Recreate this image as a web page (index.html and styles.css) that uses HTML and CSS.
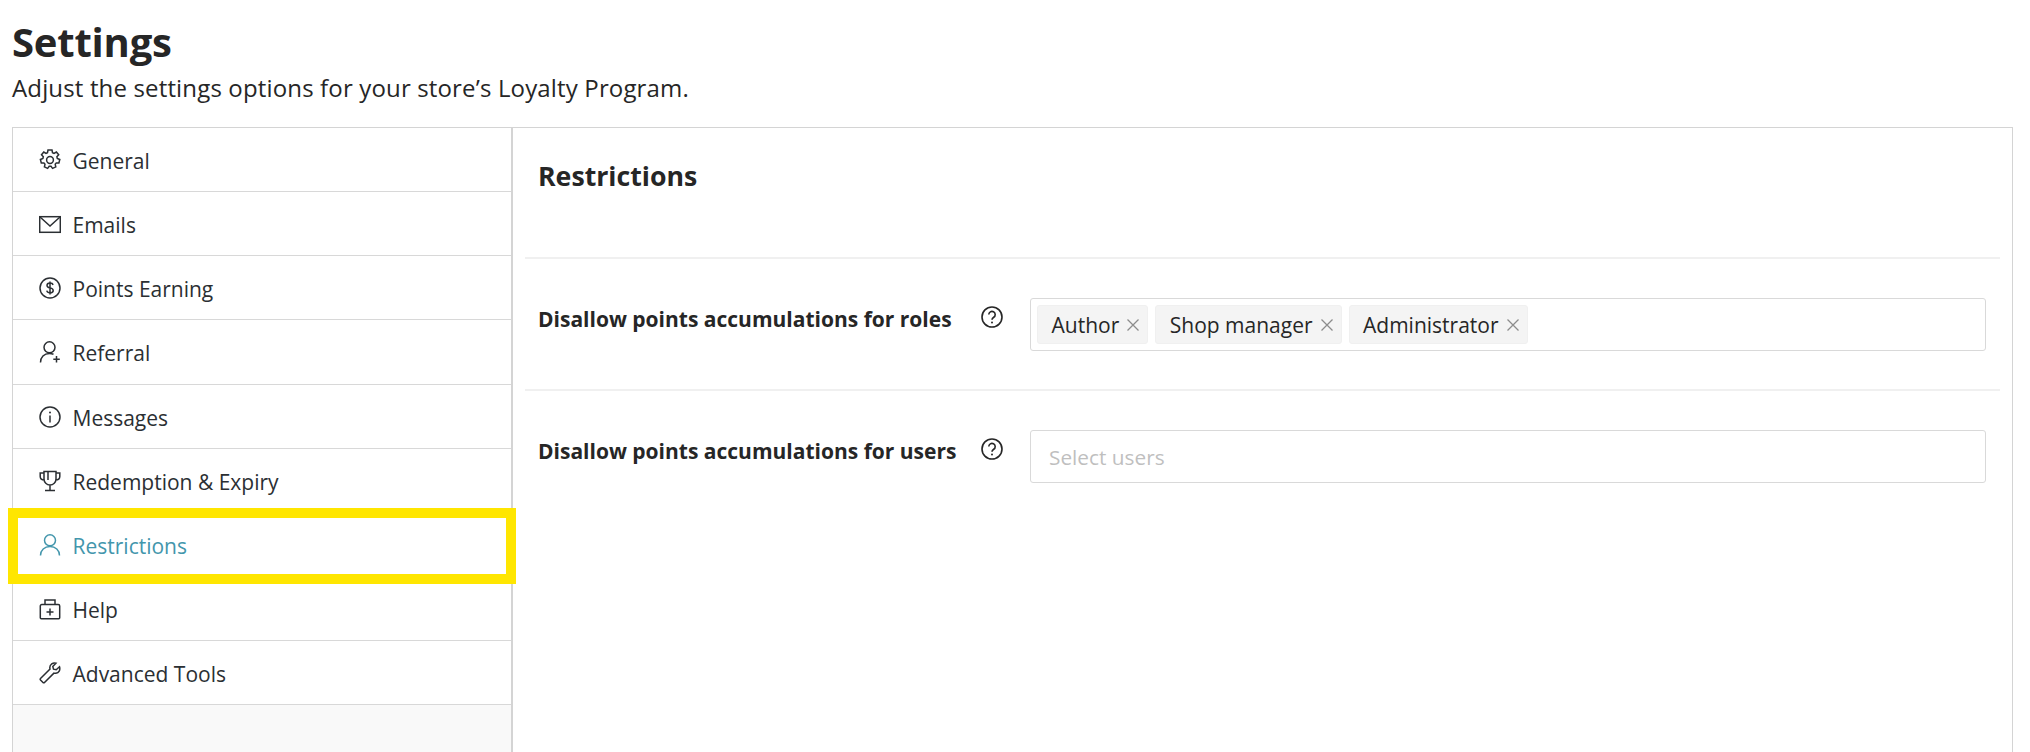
FILE: index.html
```html
<!DOCTYPE html>
<html lang="en">
<head>
<meta charset="utf-8">
<title>Settings</title>
<link rel="stylesheet" href="styles.css">
</head>
<body>
<svg class="defs" width="0" height="0" aria-hidden="true"><defs>
<symbol id="help" viewBox="0 0 22 22"><circle cx="11" cy="11" r="10" fill="none" stroke="currentColor" stroke-width="1.6"/><path d="M7.8 8.6a3.2 3.2 0 1 1 4.9 2.7c-1.100.7-1.700 1.200-1.700 2.500" fill="none" stroke="currentColor" stroke-width="1.6"/><circle cx="11" cy="16.400" r="1" fill="currentColor"/></symbol>
<symbol id="x" viewBox="0 0 14 14"><path d="M1.500 1.500l11 11M12.500 1.500l-11 11" fill="none" stroke="currentColor" stroke-width="1.300"/></symbol>
</defs></svg>
<header class="head">
  <h1 class="title">Settings</h1>
  <p class="sub">Adjust the settings options for your store’s Loyalty Program.</p>
</header>
<div class="panel">
  <nav class="side">
    <a class="item"><svg class="ico" viewBox="0 0 22 22"><path d="M9 1h4l.5 2.700 1.500.7 2.400-1.400 2.300 2.800-1.800 2 .4 1.700 2.500 1-.9 3.500-2.600-.1-1.100 1.400.6 2.600-3.200 1.500-1.600-2.100h-1.800l-1.600 2.100-3.200-1.500.6-2.600-1.100-1.400-2.600.1-.9-3.500 2.500-1 .4-1.700-1.800-2 2.300-2.800L7 4.400l1.500-.7z"/><circle cx="11" cy="11" r="3.400"/></svg><span>General</span></a>
    <a class="item"><svg class="ico" viewBox="0 0 22 22"><rect x="0.700" y="3.700" width="20.600" height="15.600"/><path d="M1 4l10 9 10-9"/></svg><span>Emails</span></a>
    <a class="item"><svg class="ico" viewBox="0 0 22 22"><circle cx="11" cy="11" r="10"/><path d="M14 8c-.3-1.300-1.500-1.900-3-1.900-1.700 0-3 .8-3 2.300 0 3.300 6.200 1.700 6.200 5 0 1.500-1.400 2.400-3.200 2.400-1.600 0-2.900-.7-3.200-2.100M11 4.500v13"/></svg><span>Points Earning</span></a>
    <a class="item"><svg class="ico" viewBox="0 0 22 22"><circle cx="10.500" cy="6.300" r="5.500"/><path d="M1.500 21.500c0-5.300 3.500-9 9-9 1.500 0 2.800.3 4 .8M17.500 15v6.500M14.300 18.200h6.500"/></svg><span>Referral</span></a>
    <a class="item"><svg class="ico" viewBox="0 0 22 22"><circle cx="11" cy="11" r="10"/><path d="M11 9.500v7"/><circle class="dot" cx="11" cy="6.500" r="1"/></svg><span>Messages</span></a>
    <a class="item"><svg class="ico" viewBox="0 0 22 22"><path d="M5 1.500h12v7.500a6 6 0 0 1-12 0zM5 3H1.200v3.500C1.200 8.800 3 10 5.500 10M17 3h3.800v3.500C20.800 8.800 19 10 16.500 10M11 15v5M6 20.500h10M9 2v8"/></svg><span>Redemption &amp; Expiry</span></a>
    <a class="item active"><svg class="ico" viewBox="0 0 22 22"><circle cx="11" cy="6.300" r="5.500"/><path d="M1.500 21.500c0-5.300 4-9 9.500-9s9.500 3.700 9.500 9"/></svg><span>Restrictions</span></a>
    <a class="item"><svg class="ico" viewBox="0 0 22 22"><path d="M2.800 6.500h16.400a1.500 1.500 0 0 1 1.500 1.500v11.800a1 1 0 0 1-1 1H2.300a1 1 0 0 1-1-1V8a1.500 1.500 0 0 1 1.500-1.500zM6 6.500V2h10v4.500M11 10.500v7M7.500 14h7"/></svg><span>Help</span></a>
    <a class="item"><svg class="ico" viewBox="0 0 22 22"><path d="M20.500 4.800l-3.300 3-2.700-.6-.7-2.800L17 1.200c-3-1-6.300 1-6.200 4.600 0 .8.200 1.300.2 1.300L1.500 16.500a1 1 0 0 0 0 1.500l2.500 2.500a1 1 0 0 0 1.500 0l9.400-9.400s1 .3 2 .2c3-.4 4.600-3.500 3.600-6.500z"/></svg><span>Advanced Tools</span></a>
  </nav>
  <main class="main">
    <h2 class="sec">Restrictions</h2>
    <section class="row">
      <div class="label"><span>Disallow points accumulations for roles</span></div>
      <svg class="help"><use href="#help"/></svg>
      <div class="select">
        <span class="tag">Author<svg class="rm"><use href="#x"/></svg></span>
        <span class="tag">Shop manager<svg class="rm"><use href="#x"/></svg></span>
        <span class="tag">Administrator<svg class="rm"><use href="#x"/></svg></span>
      </div>
    </section>
    <section class="row">
      <div class="label"><span>Disallow points accumulations for users</span></div>
      <svg class="help"><use href="#help"/></svg>
      <div class="select empty">Select users</div>
    </section>
  </main>
  <div class="mark" aria-hidden="true"></div>
</div>
</body>
</html>
```
FILE: styles.css
```css
* { box-sizing: border-box; }
html, body { margin: 0; height: 752px; overflow: hidden; background: #fff; }
body { font-family: "Open Sans", "Noto Sans", sans-serif; color: #23282d; }
.defs { position: absolute; }
.head { padding: 16px 0 0 12px; height: 127px; }
.title { margin: 0; font-size: 40px; line-height: 52px; font-weight: 700; color: #262626; letter-spacing: -0.2px; }
.sub { margin: 3px 0 0; font-size: 24px; line-height: 33px; color: #262626; letter-spacing: 0.15px; }
.panel { position: relative; display: flex; margin: 0 17px 0 12px; height: 625px; border: 1px solid #d4d4d4; border-bottom: 0; }
.side { width: 500px; flex: none; background: #f9f9f9; border-right: 2px solid #d4d4d4; }
.item { display: flex; align-items: center; gap: 11.5px; height: 64.125px; padding: 3px 0 0 26px; background: #fff; border-bottom: 1px solid #d8d8d8; font-size: 21px; color: #2b2f33; }
.item .ico { margin-top: -2px; }
.item.active { color: #4396ac; }
.ico { width: 22px; height: 22px; flex: none; fill: none; stroke: currentColor; stroke-width: 1.5; }
.ico .dot { fill: currentColor; stroke: none; }
.main { flex: 1; padding: 0 12px; }
.sec { margin: 0; height: 131px; padding: 30px 0 0 13px; font-size: 26.7px; line-height: 36px; font-weight: 700; color: #262626; border-bottom: 2px solid #f0f0f0; }
.row { display: flex; align-items: flex-start; height: 132px; padding: 39px 14px 0 13px; border-bottom: 2px solid #f0f0f0; }
.row:last-child { border-bottom: 0; }
.label { width: 443px; flex: none; font-size: 21px; line-height: 28px; font-weight: 700; color: #262626; padding-top: 7px; }
.help { width: 22px; height: 22px; margin-top: 8px; flex: none; color: #262626; }
.select { display: flex; align-items: center; gap: 7px; margin-left: 27px; flex: 1; height: 53px; padding: 0 6px; border: 1px solid #d9d9d9; border-radius: 3px; background: #fff; }
.select.empty { padding-left: 18px; font-size: 20.8px; color: #bfbfbf; }
.tag { display: flex; align-items: center; gap: 7px; height: 39px; padding: 0 7px 0 13.5px; background: #f4f4f4; border: 1px solid #f0f0f0; border-radius: 3px; font-size: 21px; color: #262626; }
.rm { width: 14px; height: 14px; color: #8c8c8c; }
.mark { position: absolute; left: -5px; top: 380px; width: 508px; height: 76px; border: 10px solid #ffe600; pointer-events: none; }
```
